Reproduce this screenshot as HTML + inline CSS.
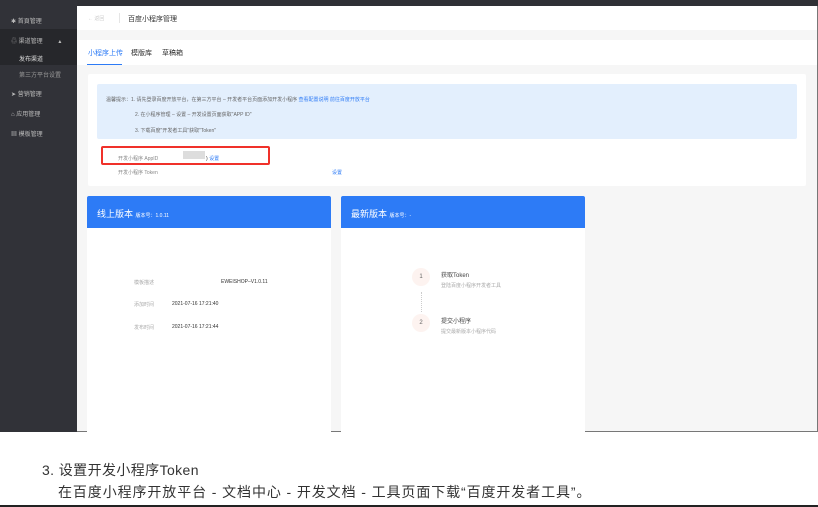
<!DOCTYPE html><html><head><meta charset="utf-8"><style>
*{margin:0;padding:0;box-sizing:border-box}
body{width:818px;height:507px;background:#fff;font-family:"Liberation Sans","Noto Sans CJK SC",sans-serif;position:relative;overflow:hidden}
.a{position:absolute}
.sb{color:#bbb;font-size:6px}
.t{font-size:5px;color:#666;white-space:nowrap}
</style></head><body>
<div class="a" style="left:0;top:0;width:818px;height:432px;background:#f6f6f6;border:1px solid #777;border-top:none"></div>
<div class="a" style="left:0;top:0;width:818px;height:6px;background:#2f3035"></div>
<div class="a" style="left:0;top:0;width:77px;height:432px;background:#313238"></div>
<div class="a" style="left:0;top:29px;width:77px;height:36px;background:#26272b"></div>
<div class="a sb" style="left:11px;top:16px">✱ 首頁管理</div>
<div class="a sb" style="left:11px;top:36px">♲ 渠道管理 <span style="margin-left:14px">▴</span></div>
<div class="a sb" style="left:19px;top:54px;color:#ddd">发布渠道</div>
<div class="a sb" style="left:19px;top:70px;color:#999">第三方平台设置</div>
<div class="a sb" style="left:11px;top:89px">➤ 营销管理</div>
<div class="a sb" style="left:11px;top:109px">⌂ 应用管理</div>
<div class="a sb" style="left:11px;top:129px">▦ 模板管理</div>
<div class="a" style="left:77px;top:6px;width:740px;height:24px;background:#fff"></div>
<div class="a t" style="left:88px;top:15px;color:#ccc">←  返回</div>
<div class="a" style="left:119px;top:13px;width:1px;height:10px;background:#e5e5e5"></div>
<div class="a" style="left:128px;top:14px;font-size:7px;color:#333">百度小程序管理</div>
<div class="a" style="left:77px;top:40px;width:740px;height:25px;background:#fff"></div>
<div class="a" style="left:88px;top:48px;font-size:7px;color:#2d7bf6">小程序上传</div>
<div class="a" style="left:87px;top:64px;width:35px;height:1px;background:#2d7bf6"></div>
<div class="a" style="left:131px;top:48px;font-size:7px;color:#333">模版库</div>
<div class="a" style="left:162px;top:48px;font-size:7px;color:#333">草稿箱</div>
<div class="a" style="left:88px;top:74px;width:718px;height:112px;background:#fff;border-radius:2px"></div>
<div class="a" style="left:97px;top:84px;width:700px;height:55px;background:#e3effd;border-radius:2px"></div>
<div class="a t" style="left:106px;top:96px">温馨提示：1. 请先登录百度开放平台，在第三方平台 – 开发者平台页面添加开发小程序 <span style="color:#2d7bf6">查看配置说明 前往百度开放平台</span></div>
<div class="a t" style="left:135px;top:111px">2. 在小程序管理 – 设置 – 开发设置页面获取"APP ID"</div>
<div class="a t" style="left:135px;top:127px">3. 下载百度"开发者工具"获取"Token"</div>
<div class="a" style="left:101px;top:146px;width:169px;height:19px;border:2px solid #f0312a;border-radius:2px"></div>
<div class="a t" style="left:118px;top:155px;color:#888">开发小程序 AppID</div>
<div class="a" style="left:183px;top:151px;width:22px;height:8px;background:#ddd"></div>
<div class="a t" style="left:206px;top:155px;color:#333">) <span style="color:#2d7bf6">设置</span></div>
<div class="a t" style="left:118px;top:169px;color:#888">开发小程序 Token</div>
<div class="a t" style="left:332px;top:169px;color:#2d7bf6">设置</div>
<div class="a" style="left:87px;top:196px;width:244px;height:236px;background:#fff"></div>
<div class="a" style="left:87px;top:196px;width:244px;height:32px;background:#2d7bf6;border-radius:2px 2px 0 0"></div>
<div class="a" style="left:97px;top:207px;font-size:9px;color:#fff">线上版本 <span style="font-size:5px">版本号：1.0.11</span></div>
<div class="a" style="left:341px;top:196px;width:244px;height:236px;background:#fff"></div>
<div class="a" style="left:341px;top:196px;width:244px;height:32px;background:#2d7bf6;border-radius:2px 2px 0 0"></div>
<div class="a" style="left:351px;top:207px;font-size:9px;color:#fff">最新版本 <span style="font-size:5px">版本号：-</span></div>
<div class="a t" style="left:134px;top:279px;color:#aaa">模板描述</div>
<div class="a t" style="left:221px;top:279px;color:#333">EWEISHOP–V1.0.11</div>
<div class="a t" style="left:134px;top:301px;color:#aaa">添加时间</div>
<div class="a t" style="left:172px;top:301px;color:#333">2021-07-16 17:21:40</div>
<div class="a t" style="left:134px;top:324px;color:#aaa">发布时间</div>
<div class="a t" style="left:172px;top:324px;color:#333">2021-07-16 17:21:44</div>
<div class="a" style="left:412px;top:268px;width:18px;height:18px;border-radius:50%;background:#fdf3f0;font-size:6px;color:#666;text-align:center;line-height:18px">1</div>
<div class="a" style="left:421px;top:292px;width:0;height:20px;border-left:1px dotted #ccc"></div>
<div class="a" style="left:412px;top:314px;width:18px;height:18px;border-radius:50%;background:#fdf3f0;font-size:6px;color:#666;text-align:center;line-height:18px">2</div>
<div class="a t" style="left:441px;top:270px;font-size:6px;color:#444">获取Token</div>
<div class="a t" style="left:441px;top:282px;color:#aaa">登陆百度小程序开发者工具</div>
<div class="a t" style="left:441px;top:316px;font-size:6px;color:#444">提交小程序</div>
<div class="a t" style="left:441px;top:328px;color:#aaa">提交最新版本小程序代码</div>
<div class="a" style="left:42px;top:460px;font-size:14px;letter-spacing:0.4px;color:#333;white-space:nowrap">3. 设置开发小程序Token</div>
<div class="a" style="left:58px;top:482px;font-size:14px;letter-spacing:0.9px;color:#333;white-space:nowrap">在百度小程序开放平台 - 文档中心 - 开发文档 - 工具页面下载“百度开发者工具”。</div>
<div class="a" style="left:0;top:505px;width:818px;height:2px;background:#222"></div>
</body></html>
